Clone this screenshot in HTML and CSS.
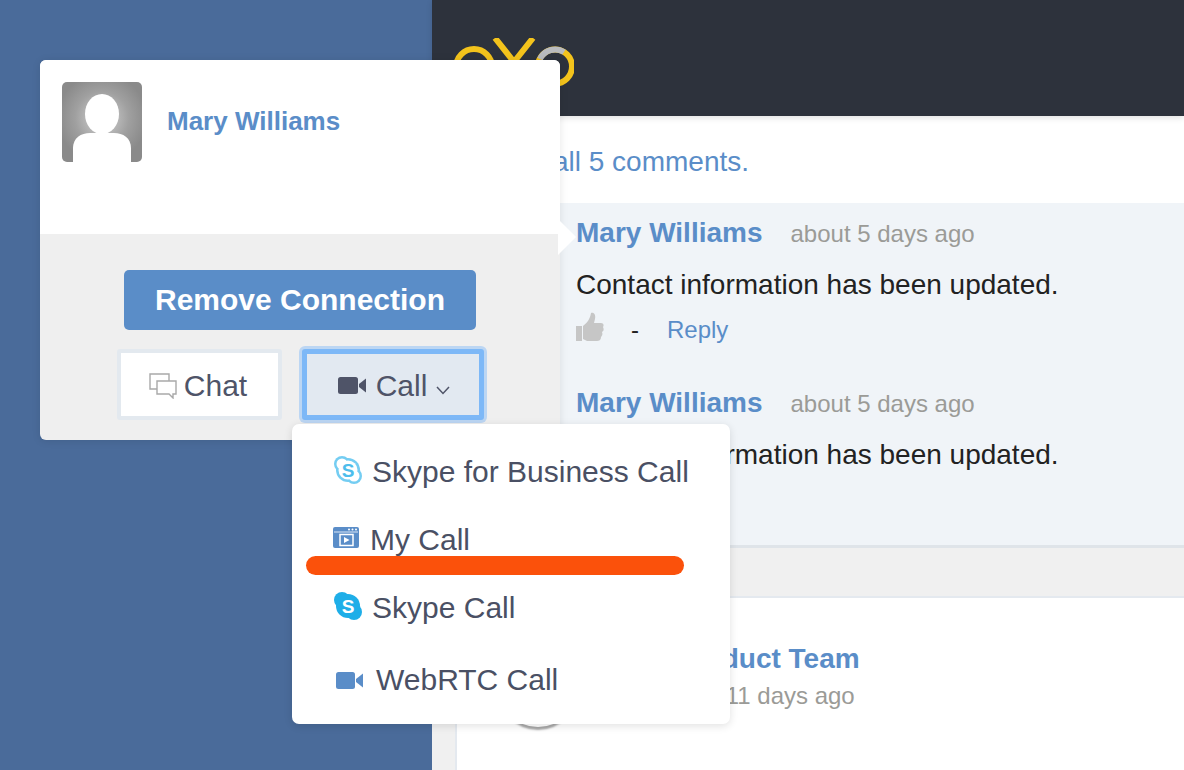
FILE: index.html
```html
<!DOCTYPE html>
<html lang="en">
<head>
    <meta charset="UTF-8">
    <title>Mary Williams - Call</title>
    <link rel="stylesheet" href="styles.css">
</head>
<body>

<div class="app">
    <aside class="sidebar"></aside>

    <main class="main">
        <header class="topbar">
            <svg class="logo" width="120" height="50" viewBox="0 0 120 50" fill="none" stroke-width="6">
                <circle cx="20" cy="29" r="18" stroke="#f3c31c"/>
                <path d="M41 0 L60 24 L79 0 M60 24 V50" stroke="#f3c31c"/>
                <circle cx="101" cy="28.5" r="17" stroke="#f3c31c"/>
                <path d="M86 21 A17 17 0 0 1 110 14" stroke="#b9bbbe"/>
            </svg>
        </header>

        <section class="card">
            <a class="view-all">View all 5 comments.</a>
            <div class="comments">
                <div class="comment">
                    <div class="comment-head">
                        <a class="comment-name">Mary Williams</a>
                        <span class="comment-time">about 5 days ago</span>
                    </div>
                    <p class="comment-text">Contact information has been updated.</p>
                    <div class="comment-actions">
                        <svg class="thumb" width="28" height="30" viewBox="0 0 28 30">
                            <path fill="#c6c6c6" d="M0 14 H6 V29 H0 Z M7 14 C11 11 14 7 15 1 C18 0 20 3 19 7 L18 11 H25 C28 11 28 14 27 15 C28 17 28 19 26 20 C27 22 26 24 25 25 C25 28 23 29 21 29 H11 L7 27 Z"/>
                        </svg>
                        <span class="dash">-</span>
                        <a class="reply">Reply</a>
                    </div>
                </div>
                <div class="comment">
                    <div class="comment-head">
                        <a class="comment-name">Mary Williams</a>
                        <span class="comment-time">about 5 days ago</span>
                    </div>
                    <p class="comment-text">Contact information has been updated.</p>
                    <div class="comment-actions"></div>
                </div>
            </div>
        </section>

        <section class="card card-post">
            <div class="post-avatar"></div>
            <div class="post-info">
                <a class="post-name">Product Team</a>
                <span class="post-time">about 11 days ago</span>
            </div>
        </section>
    </main>
</div>

<div class="popover">
    <div class="popover-top">
        <div class="avatar">
            <svg width="80" height="80" viewBox="0 0 80 80" fill="#fff">
                <ellipse cx="40" cy="32" rx="17" ry="20"/>
                <path d="M11 80 V66 C11 56 19 51 28 51 H52 C61 51 69 56 69 66 V80 Z"/>
            </svg>
        </div>
        <a class="popover-name">Mary Williams</a>
    </div>
    <div class="popover-bottom">
        <button class="btn-primary">Remove Connection</button>
        <div class="btn-row">
            <button class="btn-chat">
                <svg width="28" height="26" viewBox="0 0 28 26" fill="#fff" stroke="#a9a9a9" stroke-width="1.4">
                    <path d="M1 1 H20 V16 H1 Z"/>
                    <path d="M8 8 H27 V21 H24 V25 L20 21 H8 Z"/>
                </svg>
                Chat
            </button>
            <button class="btn-call">
                <svg width="28" height="17" viewBox="0 0 28 17" fill="#4f5468">
                    <rect x="0" y="0" width="20" height="17" rx="2.5"/>
                    <path d="M21 7 L28 1.5 V15.5 L21 10 Z"/>
                </svg>
                Call
                <svg class="chevron" width="14" height="9" viewBox="0 0 14 9" fill="none" stroke="#4f5468" stroke-width="1.5">
                    <path d="M1 1 L7 7.5 L13 1"/>
                </svg>
            </button>
        </div>
    </div>

    <ul class="menu">
        <li class="menu-item">
            <svg class="icon-skype" width="28" height="28" viewBox="0 0 28 28">
                <circle cx="8" cy="8" r="8" fill="#74cdf2"/>
                <circle cx="20" cy="20" r="8" fill="#74cdf2"/>
                <circle cx="14" cy="14" r="12" fill="#74cdf2"/>
                <circle cx="8" cy="8" r="5.5" fill="#fff"/>
                <circle cx="20" cy="20" r="5.5" fill="#fff"/>
                <circle cx="14" cy="14" r="9.5" fill="#fff"/>
                <text class="skype-s" x="14" y="20.5" text-anchor="middle" fill="#4dbdec">S</text>
            </svg>
            Skype for Business Call
        </li>
        <li class="menu-item item-mycall">
            <svg width="26" height="21" viewBox="0 0 26 21">
                <rect width="26" height="21" rx="2" fill="#5a8dc8"/>
                <rect x="1" y="4.5" width="24" height="1" fill="#dce8f5"/>
                <circle cx="16" cy="2.4" r="1" fill="#fff"/>
                <circle cx="19.5" cy="2.4" r="1" fill="#fff"/>
                <circle cx="23" cy="2.4" r="1" fill="#fff"/>
                <rect x="7" y="7.5" width="13" height="11" fill="none" stroke="#fff" stroke-width="1.5"/>
                <path d="M11 10 L16.5 13 L11 16 Z" fill="#fff"/>
            </svg>
            My Call
        </li>
        <li class="menu-item">
            <svg class="icon-skype" width="28" height="28" viewBox="0 0 28 28">
                <circle cx="8" cy="8" r="8" fill="#1eaee8"/>
                <circle cx="20" cy="20" r="8" fill="#1eaee8"/>
                <circle cx="14" cy="14" r="12" fill="#1eaee8"/>
                <text class="skype-s" x="14" y="20.5" text-anchor="middle" fill="#fff">S</text>
            </svg>
            Skype Call
        </li>
        <li class="menu-item item-webrtc">
            <svg width="27" height="17" viewBox="0 0 27 17" fill="#5a8dc8">
                <rect width="19" height="17" rx="2.5"/>
                <path d="M20 7 L27 1.5 V15.5 L20 10 Z"/>
            </svg>
            WebRTC Call
        </li>
        <li class="annotation"></li>
    </ul>
</div>

</body>
</html>
```

FILE: styles.css
```css
* {
    box-sizing: border-box;
}
body {
    font-family: 'Liberation Sans', Arial, sans-serif;
    margin: 0;
    height: 770px;
    overflow: hidden;
    background: #f0f0f0;
    position: relative;
}
a {
    color: #5a8dc8;
}
.app {
    display: flex;
    height: 770px;
}
.sidebar {
    width: 432px;
    background: #4a6b9a;
}
.main {
    flex: 1;
    background: #f0f0f0;
}
.topbar {
    height: 116px;
    background: #2d323c;
    padding: 38px 0 0 22px;
    box-shadow: 0 2px 6px rgba(0,0,0,0.12);
    position: relative;
}
.logo {
    display: block;
}
.card {
    margin-left: 24px;
    background: #fff;
    padding-top: 28px;
}
.view-all {
    display: block;
    font-size: 28px;
    line-height: 36px;
    padding-left: 29px;
    margin-bottom: 23px;
}
.comments {
    background: #f0f4f8;
    border-bottom: 3px solid #dfe4e9;
    padding: 12px 0 27px 120px;
}
.comment + .comment {
    margin-top: 37px;
}
.comment-head {
    display: flex;
    align-items: baseline;
    gap: 28px;
    line-height: 36px;
}
.comment-name {
    font-size: 28px;
    font-weight: bold;
}
.comment-time {
    font-size: 24px;
    color: #9b9b97;
}
.comment-text {
    margin: 15px 0 0;
    font-size: 28px;
    line-height: 36px;
    color: #222;
}
.comment-actions {
    display: flex;
    align-items: center;
    height: 36px;
    margin-top: 9px;
    font-size: 24px;
}
.thumb {
    margin-top: -6px;
}
.dash {
    margin-left: 27px;
    color: #222;
}
.reply {
    margin-left: 28px;
}
.card-post {
    margin-top: 48px;
    margin-left: 23px;
    height: 180px;
    padding: 43px 0 0 41px;
    border-top: 2px solid #e4e9ef;
    border-left: 2px solid #e4e9ef;
    display: flex;
    gap: 81px;
}
.post-avatar {
    width: 80px;
    height: 80px;
    margin-top: 6px;
    border-radius: 50%;
    background: #fff;
    box-shadow: 0 3px 2px rgba(0,0,0,0.35);
}
.post-info {
    display: flex;
    flex-direction: column;
    gap: 1px;
}
.post-name {
    font-size: 28px;
    line-height: 36px;
    font-weight: bold;
    margin-left: 16px;
}
.post-time {
    font-size: 24px;
    line-height: 36px;
    color: #9b9b97;
}

/* profile popover */
.popover {
    position: absolute;
    left: 40px;
    top: 60px;
    width: 520px;
    height: 380px;
    background: #efefef;
    border-radius: 6px;
    box-shadow: 0 1px 8px rgba(0,0,0,0.1);
}
.popover::after {
    content: "";
    position: absolute;
    left: 518px;
    top: 159px;
    width: 18px;
    height: 36px;
    background: #fff;
    clip-path: polygon(0 0, 100% 50%, 0 100%);
}
.popover-top {
    height: 174px;
    background: #fff;
    border-radius: 6px 6px 0 0;
    padding: 22px;
    display: flex;
    align-items: flex-start;
    gap: 25px;
}
.avatar {
    width: 80px;
    height: 80px;
    border-radius: 5px;
    overflow: hidden;
    background: radial-gradient(circle at 50% 45%, #d6d6d6 0%, #a0a0a0 45%, #8a8a8a 75%);
}
.avatar svg {
    display: block;
}
.popover-name {
    font-size: 26px;
    font-weight: bold;
    line-height: 36px;
    margin-top: 21px;
}
.popover-bottom {
    display: flex;
    flex-direction: column;
    align-items: center;
    padding-top: 36px;
}
.popover-bottom button {
    font-family: inherit;
    font-size: 30px;
    display: flex;
    align-items: center;
    justify-content: center;
    padding: 0;
}
.btn-primary {
    width: 352px;
    height: 60px;
    background: #5a8dc8;
    border: none;
    border-radius: 5px;
    color: #fff;
    font-weight: bold;
}
.btn-row {
    display: flex;
    gap: 20px;
    margin-top: 19px;
    margin-left: 1px;
}
.popover-bottom .btn-chat {
    width: 165px;
    height: 71px;
    gap: 7px;
    padding: 2px 3px 0 0;
    background: #fff;
    border: 4px solid #e3e9ef;
    border-radius: 3px;
    color: #4f5468;
}
.popover-bottom .btn-call {
    width: 182px;
    height: 71px;
    gap: 10px;
    padding: 2px 0 0 2px;
    background: #e2e9f1;
    border: 5px solid #7db8f7;
    border-radius: 3px;
    box-shadow: 0 0 0 3px #bcd6f3;
    color: #4f5468;
}
.chevron {
    margin: 9px 0 0 -1px;
}

/* call dropdown */
.menu {
    position: absolute;
    left: 252px;
    top: 364px;
    width: 438px;
    height: 300px;
    margin: 0;
    padding: 14px 0 10px;
    list-style: none;
    background: #fff;
    border-radius: 7px;
    box-shadow: 0 2px 8px rgba(0,0,0,0.12);
    z-index: 2;
}
.menu-item {
    display: flex;
    align-items: center;
    height: 68px;
    padding-left: 41px;
    gap: 10px;
    font-size: 30px;
    color: #4a5064;
}
.icon-skype {
    margin: -4px 0 0 1px;
}
.skype-s {
    font-family: 'Liberation Sans', Arial, sans-serif;
    font-size: 19px;
    font-weight: bold;
}
.item-mycall {
    gap: 11px;
}
.item-mycall svg {
    margin-top: -5px;
}
.item-webrtc {
    margin-top: 4px;
    padding-left: 44px;
    gap: 13px;
}
.annotation {
    position: absolute;
    left: 14px;
    top: 132px;
    width: 378px;
    height: 19px;
    background: #fb510b;
    border-radius: 10px;
}
```
